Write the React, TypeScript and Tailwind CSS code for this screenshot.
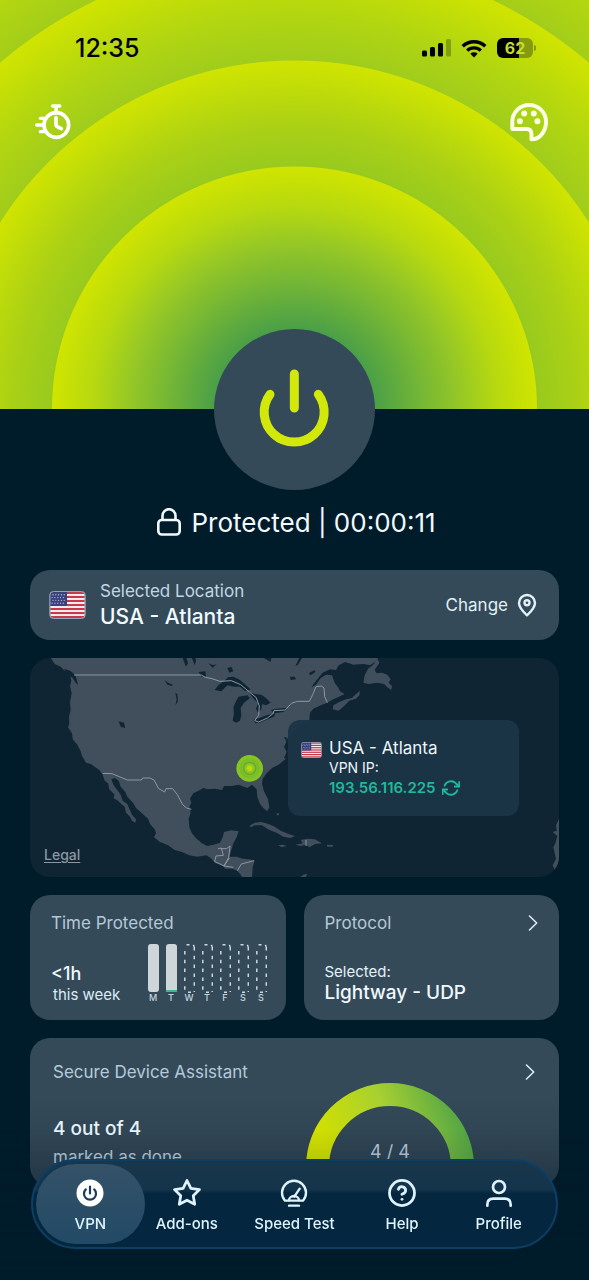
import { useState } from 'react';
import type { ReactNode } from 'react';
import { FiHelpCircle, FiRefreshCw, FiStar } from 'react-icons/fi';

const days = [
  { label: 'M', active: true },
  { label: 'T', active: true, today: true },
  { label: 'W', active: false },
  { label: 'T', active: false },
  { label: 'F', active: false },
  { label: 'S', active: false },
  { label: 'S', active: false },
];

function Flag({ className }: { className: string }) {
  return (
    <svg viewBox="0 0 39 30" className={className} aria-hidden="true">
      <defs>
        <clipPath id="flag-clip">
          <rect x="1" y="1" width="37" height="28" rx="4" />
        </clipPath>
      </defs>
      <g clipPath="url(#flag-clip)">
        <rect width="39" height="30" fill="#f3eef2" />
        {[0, 1, 2, 3, 4, 5, 6].map((i) => (
          <rect key={i} y={1 + i * 4.3} width="39" height="2.2" fill="#c8374a" />
        ))}
        <rect width="19" height="16" fill="#39427c" />
        {[3, 6, 9, 12].map((y) =>
          [3, 6, 9, 12, 15].map((x) => <circle key={`${x}-${y}`} cx={x + (y % 2)} cy={y + 1} r="0.7" fill="#b9bfdc" />)
        )}
      </g>
      <rect x="0.5" y="0.5" width="38" height="29" rx="4" fill="none" stroke="#9fb0c4" />
    </svg>
  );
}

function Chevron() {
  return (
    <svg viewBox="0 0 10 16" className="h-4 w-[10px]" fill="none" stroke="#dcebf5" strokeWidth="1.6" strokeLinecap="round" strokeLinejoin="round" aria-hidden="true">
      <path d="M1.5 1 8.7 8 1.5 15" />
    </svg>
  );
}

function StatusBar() {
  return (
    <div className="flex h-5 items-center justify-between pl-[75px] pr-[53px] text-black">
      <span className="text-[25px] leading-5 font-medium">12:35</span>
      <div className="flex items-center gap-[10px]">
        <svg viewBox="0 0 29 18" className="h-[18px] w-[29px]" aria-hidden="true">
          <rect x="0" y="11.500" width="5" height="6" rx="1.5" />
          <rect x="8" y="8" width="5" height="9.500" rx="1.5" />
          <rect x="16" y="4" width="5" height="13.500" rx="1.5" />
          <rect x="24" y="0" width="5" height="17.500" rx="1.5" opacity="0.25" />
        </svg>
        <svg viewBox="0 0 26 19" className="h-[19px] w-[26px]" fill="none" stroke="#000" strokeWidth="3.400" aria-hidden="true">
          <path d="M1.700 7.300a16.200 16.200 0 0 1 22.600 0" />
          <path d="M6.200 11.600a9.800 9.800 0 0 1 13.600 0" />
          <path d="M13 18.600 9.300 14.800a5.400 5.400 0 0 1 7.400 0Z" fill="#000" stroke="none" />
        </svg>
        <div className="flex items-center gap-px">
          <span className="flex h-5 w-9 items-center justify-center rounded-md bg-linear-to-r from-black from-62% to-[#859a0c] to-62% text-base leading-5 font-bold text-[#c4dc2a]">
            62
          </span>
          <span className="h-[6px] w-[2px] rounded-r-full bg-[#859a0c]" />
        </div>
      </div>
    </div>
  );
}

function Header() {
  return (
    <header className="h-[409px] bg-[radial-gradient(circle_at_50%_100%,#4a9f47_80px,#6eb338_120px,#95c726_165px,#b7d90f_203px,#d0e400_242px,#98ca1e_243px,#a9d016_280px,#bedb0a_318px,#d0e400_348px,#a0cc1c_349px,#b2d610_395px,#d0e400_454px,#a3cd1a_455px,#b4d70f_504px)] pt-[38px]">
      <StatusBar />
      <div className="mt-11 flex items-center justify-between pr-10 pl-[34px]">
        <button aria-label="Shortcuts timer">
          <svg viewBox="42 248 114 114" className="size-[38px]" fill="none" stroke="#fff" strokeWidth="11" strokeLinecap="round" aria-hidden="true">
            <circle cx="109" cy="314" r="37" />
            <path d="M98 257h21M108.500 257v20M108 292v19q0 7 6 9l10 5" />
            <path d="M61 294h12M50 314h20M61 334h12" strokeWidth="10" />
          </svg>
        </button>
        <button aria-label="Themes">
          <svg viewBox="326 243 121 121" className="size-10" fill="none" stroke="#fbffe4" strokeWidth="12" strokeLinejoin="round" aria-hidden="true">
            <path d="M336 325V303A51 51 0 0 1 387 252A51 51 0 0 1 438 303C438 330 420 356 394 356V341Q394 325 379 325Z" />
            <g fill="#fbffe4" stroke="none">
              <circle cx="372" cy="278" r="9" />
              <circle cx="401" cy="278" r="9" />
              <circle cx="359" cy="301" r="9" />
              <circle cx="412" cy="301" r="9" />
            </g>
          </svg>
        </button>
      </div>
    </header>
  );
}

function LocationMap() {
  return (
    <section className="relative h-[219px] overflow-hidden rounded-[20px] bg-[#0f2533]">
      <svg viewBox="30 24 1587 657" preserveAspectRatio="xMidYMid slice" className="size-full" aria-hidden="true">
        <g fill="#414e5b">
          <path d="M90 20 104 42 122 50 134 62 148 70 154 92 150 108 155 130 150 158 152 180 147 200 148 222 144 232 156 250 158 268 172 284 182 304 186 318 198 338 214 343 226 352 238 360 248 374 254 392 264 400 268 418 284 434 280 444 294 452 304 462 314 470 318 488 330 500 336 512 346 518 348 508 336 494 328 476 322 462 308 452 302 434 290 418 280 404 274 388 284 384 296 392 302 410 316 426 322 440 340 460 348 474 364 488 384 506 390 522 404 538 408 550 402 562 420 576 444 586 464 600 486 606 508 616 532 620 560 616 574 626 586 640 606 646 616 656 636 656 652 662 662 674 668 684H696L698 652 704 632 686 628 668 626 650 620 628 620 634 600 640 580 650 562 656 544 634 541 612 546 608 562 600 578 580 584 562 588 546 580 530 566 516 550 508 532 506 506 512 488 508 470 514 458 510 446 520 430 540 420 550 414 562 418 584 416 606 420 612 408 636 408 656 404 672 410 682 414 696 404 710 418 712 440 720 462 732 476 742 484 748 472 744 448 732 424 726 402 728 386 740 370 756 354 776 344 796 328 802 304 796 284 804 262 830 240 850 225 868 210 870 188 880 176 906 164 922 158 940 148 962 138 974 132 960 124 954 112 944 98 936 76 918 74 902 84 888 104 874 112 888 92 908 68 930 58 948 60 956 46 976 36 1000 44 1030 42 1050 46 1068 34 1074 20Z" />
          <path d="M1072 24 1060 44 1044 56 1034 76 1030 98 1046 102 1072 98 1092 102 1102 112 1114 120 1116 108 1106 98 1112 88 1102 74 1086 68 1070 70 1064 60 1078 38Z" />
          <path d="M938 178 940 166 958 156 978 148 996 144 1008 132 1020 122 1018 136 1008 146 988 152 970 170 956 182Z" />
          <path d="M688 528 704 518 724 516 746 522 764 530 782 542 800 550 824 558 812 564 790 560 770 548 748 540 726 526 704 526 694 532Z" />
          <path d="M842 570 862 566 884 568 906 580 886 582 868 592 858 584 842 588 826 584 848 580Z" />
          <path d="M774 586 788 584 800 588 786 592ZM920 584 940 585 938 590 922 590ZM838 684 850 674 862 672 856 684ZM768 490 778 490 774 498Z" />
          <path d="M1620 500 1608 526 1610 542 1598 546 1612 558 1606 580 1600 592 1604 610 1608 626 1598 646 1606 664 1620 650Z" />
        </g>
        <g fill="#0f2533">
          <path d="M584 120 596 104 612 94 624 82 640 80 660 90 676 104 692 118 676 124 660 110 642 110 622 106 604 124Z" />
          <path d="M638 212 642 190 640 172 648 154 656 140 682 136 690 144 672 158 662 174 664 196 660 212 648 218Z" />
          <path d="M686 126 704 132 724 134 738 144 752 158 738 166 726 162 724 178 714 188 708 176 714 160 702 148Z" />
          <path d="M700 210 718 204 740 196 766 190 762 200 742 208 720 218 706 220Z" />
          <path d="M752 180 772 176 796 174 802 178 790 186 764 190Z" />
          <path d="M486 20 498 50 504 40 498 20ZM514 20 524 46 528 32 526 20ZM622 54 634 50 640 64 628 68ZM566 40 580 46 590 42 578 54ZM536 66 556 64 558 78 544 80ZM724 20 742 30 752 36 754 22ZM810 80 824 80 828 88 812 90ZM826 48 838 24 846 24 834 44ZM866 70 884 60 886 66 872 76Z" />
          <path d="M434 90 444 98 458 104 456 108 442 104ZM466 128 472 132 474 154 466 166 470 150ZM296 214 312 218 316 234 302 230ZM132 56 150 62 166 74 174 104 168 100 158 84 144 76ZM792 262 800 262 802 326 792 324 800 306 792 290 800 276Z" />
        </g>
        <g fill="none" stroke="#8c98a3" strokeWidth="3" strokeLinejoin="round">
          <path d="M162 75H544L556 82 576 86 600 94 634 92 662 104 688 126 708 142 718 168 716 196 704 212 716 216 742 204 760 190 762 182 796 180 814 160 832 154H868L880 130 888 110 904 108 912 114 914 140 922 158" />
          <path d="M248 370 276 371 322 390H364L368 384H390L402 390 416 416 434 426 438 416 458 416 472 434 488 464 500 474 514 478" />
          <path d="M594 596 604 594 610 616M602 596H620L630 588 626 622 612 648 584 634 588 618 610 616M628 624 612 648 640 652M652 662 664 642 702 632M858 570 858 588" />
        </g>
        <circle cx="689" cy="355" r="40" fill="#86c71f" />
        <circle cx="689" cy="355" r="31" fill="#7cbd2c" />
        <circle cx="689" cy="355" r="20" fill="#62ac30" />
        <circle cx="689" cy="355" r="16" fill="#8fc51f" />
        <circle cx="689" cy="355" r="9" fill="#b8d810" />
      </svg>
      <a href="#legal" className="absolute bottom-[14px] left-[14px] text-sm leading-4 font-medium text-[#8d98a2] underline underline-offset-2">
        Legal
      </a>
      <div className="absolute top-[62px] right-10 flex h-24 w-[231px] gap-[7px] rounded-xl bg-[#1b3447]/95 pt-[18px] pl-[13px]">
        <Flag className="mt-[4px] h-4 w-[21px]" />
        <div className="flex flex-col text-[#eef6fb]">
          <span className="text-[17px] leading-5">USA - Atlanta</span>
          <span className="text-sm leading-5">VPN IP:</span>
          <span className="flex items-center gap-[6px] text-[15px] leading-5 font-semibold text-[#20b99a]">
            193.56.116.225
            <button aria-label="Refresh IP address">
              <FiRefreshCw size={18} strokeWidth={2.4} />
            </button>
          </span>
        </div>
      </div>
    </section>
  );
}

function TimeProtected() {
  return (
    <section className="flex h-[125px] flex-col rounded-[20px] bg-[#344a59] pt-[17px] pr-[19px] pl-[21px]">
      <h2 className="text-[17px] leading-[22px] text-[#b4c8d8]">Time Protected</h2>
      <div className="mt-[9px] flex items-start justify-between">
        <div className="flex flex-col pt-5">
          <span className="text-lg leading-[22px] font-medium text-[#f0f8fd]">&lt;1h</span>
          <span className="pl-[2px] text-[15px] leading-5 text-[#dcecf6]">this week</span>
        </div>
        <div className="flex gap-[7px]">
          {days.map((day, i) => (
            <div key={i} className="flex w-[11px] flex-col items-center">
              <svg viewBox="0 0 11 50" className="h-[50px] w-[11px]" aria-hidden="true">
                {day.active ? (
                  <>
                    <rect y="1" width="11" height="48" rx="3" fill="#cfd6da" />
                    {day.today && <rect y="47" width="11" height="2" fill="#3fb792" />}
                  </>
                ) : (
                  <g fill="none" stroke="#cdd8df" strokeWidth="1.500">
                    <path d="M0.800 8V49M10.300 4V49" strokeDasharray="3.500 5.300" />
                    <path d="M2.500 1.800h3M9.300 1.800l1 2M4 49.200h3" />
                  </g>
                )}
              </svg>
              <span className="text-[9px] leading-[10px] font-medium text-[#c5d3dd]">{day.label}</span>
            </div>
          ))}
        </div>
      </div>
    </section>
  );
}

function Protocol() {
  return (
    <section className="flex h-[125px] flex-col rounded-[20px] bg-[#344a59] px-[21px] pt-[17px]">
      <div className="flex items-center justify-between">
        <h2 className="text-[17px] leading-[22px] text-[#b4c8d8]">Protocol</h2>
        <button aria-label="Open protocol settings">
          <Chevron />
        </button>
      </div>
      <span className="mt-7 text-[15px] leading-5 text-[#e4f1f9]">Selected:</span>
      <span className="text-[19px] leading-[22px] font-medium text-[#f0f8fd]">Lightway - UDP</span>
    </section>
  );
}

function DeviceAssistant() {
  return (
    <section className="flex h-[148px] flex-col overflow-hidden rounded-[20px] bg-linear-to-b from-[#344a59] from-40% to-[#2d3f4e] pt-[23px] pr-6 pl-[23px]">
      <div className="flex items-center justify-between">
        <h2 className="text-[17px] leading-[22px] text-[#b4cada]">Secure Device Assistant</h2>
        <button aria-label="Open secure device assistant">
          <Chevron />
        </button>
      </div>
      <div className="flex justify-between">
        <div className="flex flex-col pt-[35px]">
          <span className="text-[19px] leading-[22px] font-medium text-[#e6f3fa]">4 out of 4</span>
          <span className="mt-[6px] text-[17px] leading-[22px] text-[#b4cada]">marked as done</span>
        </div>
        <div className="mr-[61px] grid">
          <svg viewBox="0 0 168 84" className="col-start-1 row-start-1 h-[84px] w-[168px]" fill="none" aria-hidden="true">
            <defs>
              <linearGradient id="gauge" x1="0" y1="0.5" x2="1" y2="0.3">
                <stop offset="0" stopColor="#d2e000" />
                <stop offset="0.5" stopColor="#a8d030" />
                <stop offset="1" stopColor="#52a546" />
              </linearGradient>
            </defs>
            <path d="M11.500 84a72.500 72.500 0 0 1 145 0" stroke="url(#gauge)" strokeWidth="23" />
          </svg>
          <span className="col-start-1 row-start-1 pt-[58px] text-center text-lg leading-[22px] text-[#b4c8d8]">4 / 4</span>
        </div>
      </div>
    </section>
  );
}

function NavItem({ label, active, onClick, children }: { label: string; active: boolean; onClick: () => void; children: ReactNode }) {
  return (
    <button
      onClick={onClick}
      className={`flex h-full flex-col items-center gap-[6px] rounded-full pt-[14px] text-[#dff3fd] ${active ? 'bg-linear-to-b from-[#345268] to-[#224a66]' : ''}`}
    >
      <span className="flex h-[30px] items-center">{children}</span>
      <span className="text-[15px] leading-5 font-medium whitespace-nowrap">{label}</span>
    </button>
  );
}

function BottomNav() {
  const [tab, setTab] = useState('VPN');

  const items: { label: string; icon: ReactNode }[] = [
    {
      label: 'VPN',
      icon: (
        <svg viewBox="0 0 28 28" className="size-7" fill="none" stroke="#1c3d57" strokeWidth="2.200" strokeLinecap="round" aria-hidden="true">
          <circle cx="14" cy="14" r="13.500" fill="#fff" stroke="none" />
          <path d="M14 7.500v7M9.800 10.400a6 6 0 1 0 8.400 0" />
        </svg>
      ),
    },
    { label: 'Add-ons', icon: <FiStar size={30} strokeWidth={2.2} /> },
    {
      label: 'Speed Test',
      icon: (
        <svg viewBox="784 88 84 84" className="size-7" fill="none" stroke="currentColor" strokeWidth="7" strokeLinecap="round" strokeLinejoin="round" aria-hidden="true">
          <path d="M799 153a36 36 0 1 1 54 0Z" />
          <path d="M811 152a15 13 0 0 1 30 0M827 141 843 117M811 168h30" />
        </svg>
      ),
    },
    { label: 'Help', icon: <FiHelpCircle size={30} strokeWidth={2.2} /> },
    {
      label: 'Profile',
      icon: (
        <svg viewBox="582 88 84 84" className="size-7" fill="none" stroke="currentColor" strokeWidth="8" strokeLinecap="round" aria-hidden="true">
          <circle cx="624" cy="112" r="18" />
          <path d="M589 168v-3q0-18 18-18h34q18 0 18 18v3" />
        </svg>
      ),
    },
  ];

  return (
    <div className="fixed inset-x-0 bottom-0 px-[31px] pb-[31px]">
      <nav className="grid h-[90px] grid-cols-[108fr_84fr_130fr_84fr_108fr] rounded-full border-2 border-[#0b3f66] bg-linear-to-b from-[#18374c] via-[#14344b] via-33% to-[#04273f] to-38% p-[3px]">
        {items.map((item) => (
          <NavItem key={item.label} label={item.label} active={tab === item.label} onClick={() => setTab(item.label)}>
            {item.icon}
          </NavItem>
        ))}
      </nav>
    </div>
  );
}

export default function App() {
  return (
    <div className="min-h-screen bg-[#001b2a] font-['Inter','Liberation_Sans',sans-serif]">
      <Header />
      <main className="flex flex-col px-[30px] pb-20">
        {/* Connect button straddles the header edge */}
        <button aria-label="Disconnect VPN" className="-mt-20 size-[161px] self-center rounded-full bg-[#344a59]">
          <svg viewBox="41 27 483 483" className="size-full" fill="none" stroke="#d2e80a" strokeWidth="27" strokeLinecap="round" aria-hidden="true">
            <path d="M282 162V264M209 223A90 90 0 1 0 354 223" />
          </svg>
        </button>
        <div className="mt-4 mb-8 flex h-8 items-center justify-center gap-[10px] pl-1 text-[26px] text-[#f2fafe]">
          <svg viewBox="1 0 24 28" className="h-7 w-6" fill="none" stroke="currentColor" strokeWidth="2.600" aria-hidden="true">
            <rect x="2.300" y="12" width="21.400" height="14.500" rx="3.500" />
            <path d="M6.500 12V7.700a6.500 6.500 0 0 1 13 0V12" />
          </svg>
          <span>Protected | 00:00:11</span>
        </div>

        <div className="flex flex-col gap-[18px]">
          <section className="flex h-[70px] items-center rounded-[20px] bg-[#344a59] pr-[22px] pl-[19px]">
            <Flag className="h-7 w-[37px]" />
            <div className="ml-[14px] flex flex-1 flex-col pb-[2px]">
              <span className="text-[17px] leading-[26px] text-[#c3d6e4]">Selected Location</span>
              <span className="text-[21px] leading-[26px] font-medium text-[#f2fafe]">USA - Atlanta</span>
            </div>
            <button className="flex items-center gap-[9px] text-[17px] leading-[22px] text-[#e2f0f8]">
              Change
              <svg viewBox="0 0 20 24" className="h-6 w-5" fill="none" stroke="currentColor" strokeWidth="2.400" strokeLinejoin="round" aria-hidden="true">
                <path d="M10 22.300C5.500 18.200 2 14.500 2 10a8 8 0 0 1 16 0c0 4.500-3.500 8.200-8 12.300Z" />
                <circle cx="10" cy="9.800" r="2.500" />
              </svg>
            </button>
          </section>

          <LocationMap />

          <div className="grid grid-cols-2 gap-[18px]">
            <TimeProtected />
            <Protocol />
          </div>

          <DeviceAssistant />
        </div>
      </main>
      {/* Content fades out behind the tab bar */}
      <div className="pointer-events-none fixed inset-x-0 bottom-0 h-[150px] bg-linear-to-b from-transparent to-[#001b2a]/60" />
      <BottomNav />
    </div>
  );
}
